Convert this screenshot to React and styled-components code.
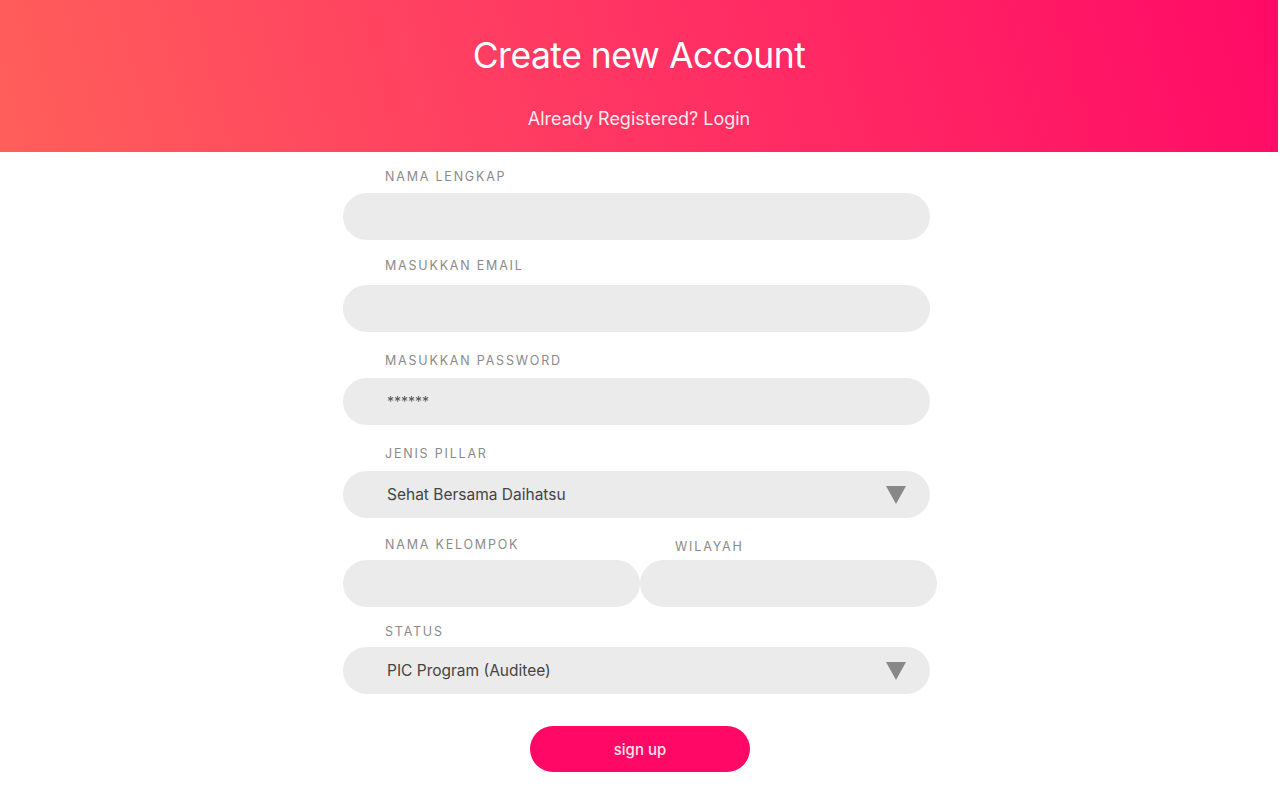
import React, { useState } from "react";
import styled, { createGlobalStyle } from "styled-components";

const GlobalStyle = createGlobalStyle`
  * { box-sizing: border-box; }
  body {
    margin: 0;
    background: #ffffff;
    font-family: Inter, "Noto Sans", sans-serif;
  }
`;

const Page = styled.div`
  width: 1280px;
  min-height: 800px;
  background: #fff;
`;

const Header = styled.header`
  height: 152px;
  margin-right: 2px;
  background: linear-gradient(75deg, #ff5f5a 0%, #ff3c62 40%, #ff0a66 100%);
  color: #fff;
  display: flex;
  flex-direction: column;
  align-items: center;
  padding-top: 33px;
`;

const Title = styled.h1`
  margin: 0;
  font-size: 35.5px;
  font-weight: 400;
  letter-spacing: -0.5px;
  line-height: 46px;
`;

const SubTitle = styled.p`
  margin: 29px 0 0;
  font-size: 18px;
  line-height: 22px;
  color: #fde8ee;
`;

const Form = styled.form`
  width: 594px;
  margin: 0 auto;
  padding-top: 17px;
  display: flex;
  flex-direction: column;
`;

const Group = styled.div`
  display: flex;
  flex-direction: column;
  margin-bottom: ${p => p.$mb ?? 18}px;
`;

const Row = styled.div`
  display: flex;
  align-items: flex-start;
  margin-bottom: 16px;
`;

const Label = styled.label`
  font-size: 12.5px;
  letter-spacing: 1.8px;
  color: #8a8a8a;
  text-transform: uppercase;
  line-height: 16px;
  padding-left: ${p => p.$pl ?? 42}px;
  margin-top: ${p => p.$mt ?? 0}px;
  margin-bottom: ${p => p.$mb ?? 9}px;
`;

const Input = styled.input`
  width: ${p => p.$w ?? 587}px;
  height: 47px;
  border: none;
  border-radius: 24px;
  background: #ebebeb;
  padding: 0 44px;
  font-family: inherit;
  font-size: 14px;
  color: #555;
  outline: none;
`;

const SelectBox = styled.div`
  width: 587px;
  height: 47px;
  border-radius: 24px;
  background: #ebebeb;
  display: flex;
  align-items: center;
  justify-content: space-between;
  padding: 0 24px 0 44px;
  font-size: 15.5px;
  color: #444;
`;

const Arrow = styled.span`
  width: 0;
  height: 0;
  border-left: 10px solid transparent;
  border-right: 10px solid transparent;
  border-top: 18px solid #888;
`;

const Button = styled.button`
  align-self: center;
  margin: 32px 0 0 0;
  width: 220px;
  height: 46px;
  border: none;
  border-radius: 23px;
  background: #ff0866;
  color: #fde3ec;
  font-family: inherit;
  font-size: 15px;
  font-weight: 500;
`;

export default function App() {
  const [pw, setPw] = useState("******");
  return (
    <Page>
      <GlobalStyle />
      <Header>
        <Title>Create new Account</Title>
        <SubTitle>Already Registered? Login</SubTitle>
      </Header>
      <Form onSubmit={e => e.preventDefault()}>
        <Group>
          <Label $mb={8}>Nama Lengkap</Label>
          <Input />
        </Group>
        <Group $mb={21}>
          <Label $mb={11}>Masukkan Email</Label>
          <Input />
        </Group>
        <Group $mb={21}>
          <Label>Masukkan Password</Label>
          <Input value={pw} onChange={e => setPw(e.target.value)} />
        </Group>
        <Group>
          <Label>Jenis Pillar</Label>
          <SelectBox>
            Sehat Bersama Daihatsu
            <Arrow />
          </SelectBox>
        </Group>
        <Row>
          <Group $mb={0}>
            <Label $mt={1} $mb={7}>Nama Kelompok</Label>
            <Input $w={297} />
          </Group>
          <Group $mb={0}>
            <Label $pl={35} $mt={3} $mb={5}>Wilayah</Label>
            <Input $w={297} />
          </Group>
        </Row>
        <Group $mb={0}>
          <Label $mt={1} $mb={7}>Status</Label>
          <SelectBox>
            PIC Program (Auditee)
            <Arrow />
          </SelectBox>
        </Group>
        <Button type="submit">sign up</Button>
      </Form>
    </Page>
  );
}
